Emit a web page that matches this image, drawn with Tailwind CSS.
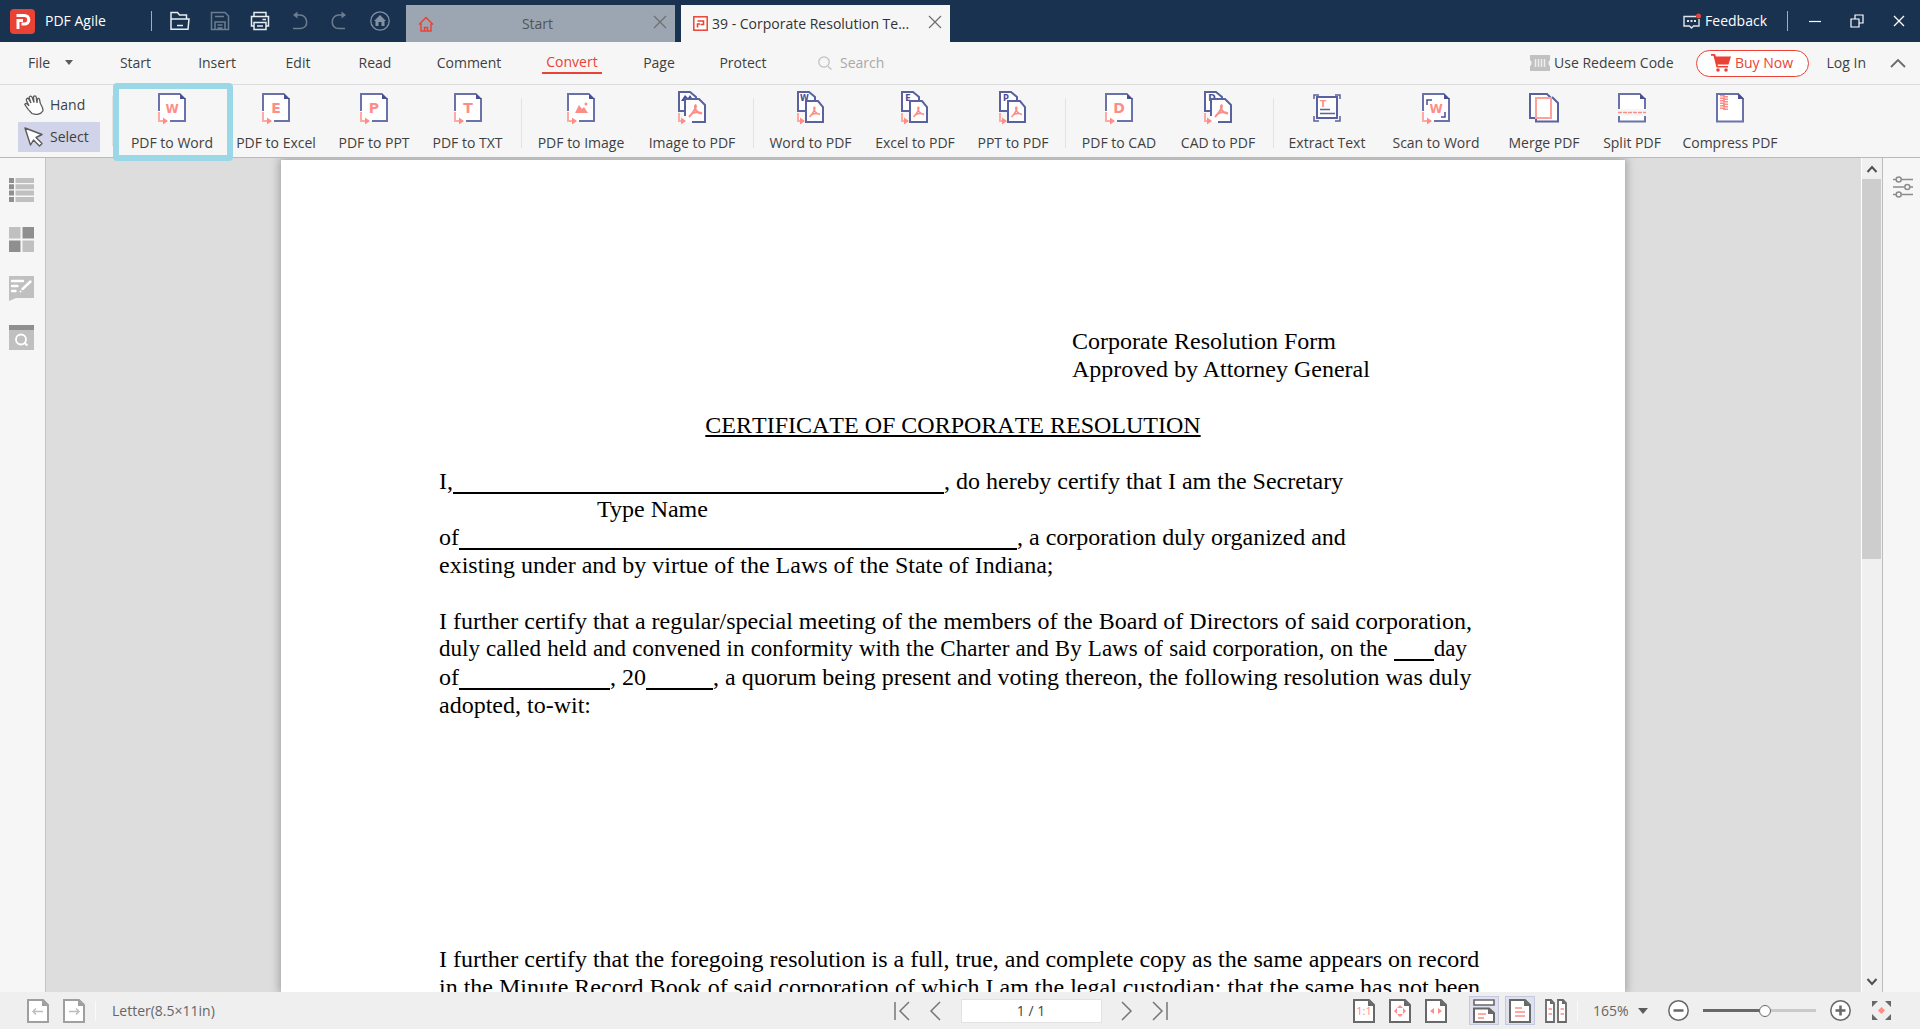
<!DOCTYPE html>
<html lang="en">
<head>
<meta charset="utf-8">
<title>PDF Agile</title>
<script src="https://cdn.jsdelivr.net/npm/@tailwindcss/browser@4"></script>
</head>
<body class="flex h-screen flex-col overflow-hidden bg-[#f6f6f6] font-['Open_Sans',sans-serif] text-sm text-[#3f3f3f]">

<!-- Shared icon shapes -->
<svg class="hidden">
  <symbol id="from-pdf" viewBox="0 0 28 32">
    <path d="M1 1H22L27 6V28H1Z" fill="#fff"/>
    <path d="M1 18V1H22M27 5V28H12" fill="none" stroke="#6a72ab" stroke-width="2"/>
    <path d="M22 0L28 6H22Z" fill="#4a4f94"/>
    <path d="M1 19V28H6" fill="none" stroke="#ffa9a3" stroke-width="2"/>
    <path d="M5 24.5L10 28L5 31.5Z" fill="#ff8d87"/>
  </symbol>
  <symbol id="back-page" viewBox="0 0 28 34">
    <path d="M1 1H12L18 6V20H1Z" fill="#fff" stroke="#5a619f" stroke-width="2"/>
    <path d="M1 22V30H4" fill="none" stroke="#ffa9a3" stroke-width="2"/>
    <path d="M3 26.5L8 30L3 33.5Z" fill="#ff8d87"/>
  </symbol>
  <symbol id="front-page" viewBox="0 0 28 34">
    <path d="M9 10H21L26 16V31H9Z" fill="#fff" stroke="#5a619f" stroke-width="2"/>
    <path d="M17 16C19 16 17.5 21 12.5 26M17 16C16 19 19 23 23 23.5M13.5 24.5C16 22.5 20 22 23 23.5" fill="none" stroke="#ff8d87" stroke-width="1.6"/>
  </symbol>
  <symbol id="front-page-open" viewBox="0 0 28 34">
    <path d="M8 8H21L27 14V31H8Z" fill="#fff"/>
    <path d="M7 25V8H21L27 14V31H14" fill="none" stroke="#5a619f" stroke-width="2"/>
    <path d="M17 14C19.5 14 17 20 11 26M17 14C16 18 19 22 24 22.5M12.500 24C15 21 20 20.500 24 22.500" fill="none" stroke="#ff8d87" stroke-width="2"/>
  </symbol>
  <symbol id="sheet" viewBox="0 0 22 24">
    <path d="M1 1H16L21 6V23H1Z" fill="#fff" stroke="currentColor" stroke-width="2"/>
    <path d="M15 1L21 7H15Z" fill="currentColor"/>
  </symbol>
</svg>

<header class="flex h-[42px] shrink-0 items-center bg-[#19324f] text-white">
  <div class="flex w-[151px] items-center gap-2.5 pl-2.5">
    <svg class="h-[25px] w-[25px]" viewBox="0 0 25 25"><rect width="25" height="25" rx="4" fill="#ea4335"/><path d="M8 20V11.500H13" fill="none" stroke="#fff" stroke-width="3"/><path d="M6.500 6.500H14.500A4 4 0 0 1 14.500 15H11.500" fill="none" stroke="#fff" stroke-width="3.200"/></svg>
    <span>PDF Agile</span>
  </div>
  <div class="h-5 w-px bg-[#a3adb9]"></div>
  <nav class="flex w-[254px] items-center gap-5 pl-[18px]" aria-label="Quick actions">
    <button aria-label="Open"><svg class="size-5" viewBox="0 0 20 20" fill="none" stroke="#e8edf2" stroke-width="1.500"><path d="M1 8V1.500H7.500L9.500 4H16.500V7.500M1 18V8H19L18 18.200H1ZM7 14.500H13"/></svg></button>
    <button aria-label="Save"><svg class="size-5" viewBox="0 0 20 20" fill="none" stroke="#6d7d90" stroke-width="1.500"><path d="M1.500 1.500H15L18.500 5V18.500H1.500ZM5 5.500H14M5 18V11H15V18M7.500 14H12.500M7.500 17H12.500"/></svg></button>
    <button aria-label="Print"><svg class="size-5" viewBox="0 0 20 20" fill="none" stroke="#e8edf2" stroke-width="1.500"><path d="M4 5.500V1.500H16V5.500M4 15H1.500V5.500H18.500V15H16M4 11.500H16V18.500H4ZM7 15H13M12.500 8.500H16"/></svg></button>
    <button aria-label="Undo"><svg class="size-5" viewBox="0 0 20 20" fill="none" stroke="#6d7d90" stroke-width="1.500"><path d="M4 4H10C18 4 19.500 17.500 10.500 17.500H3"/><path d="M7.500 .5L3 4L7.500 7.500Z" fill="#6d7d90" stroke="none"/></svg></button>
    <button aria-label="Redo"><svg class="size-5" viewBox="0 0 20 20" fill="none" stroke="#6d7d90" stroke-width="1.500"><path d="M15 4H9C.5 4 -.5 17.500 9 17.500H15"/><path d="M11.500 .5L16 4L11.500 7.500Z" fill="#6d7d90" stroke="none"/></svg></button>
    <button aria-label="Home"><svg class="size-5" viewBox="0 0 20 20"><circle cx="10" cy="10" r="9.200" fill="none" stroke="#8391a2" stroke-width="1.300"/><path d="M10 4L16 10H14.500V15H11.500V11H8.500V15H5.500V10H4Z" fill="#8391a2"/></svg></button>
  </nav>
  <div class="flex gap-1.5 self-end text-[#333]">
    <div class="flex h-[37px] w-[269px] items-center bg-[#9ca6b2] px-2">
      <svg class="mx-1 size-4" viewBox="0 0 16 16" fill="none" stroke="#ea4335" stroke-width="1.500"><path d="M1 8.500L8 1.500L15 8.500M3 7.500V15H13V7.500M6.500 15V11.500H9.500V15"/></svg>
      <button class="flex-1 pr-4 text-center text-[#50545b]">Start</button>
      <button aria-label="Close Start" class="pb-1"><svg class="size-3.5" viewBox="0 0 14 14" stroke="#6f6f6f" stroke-width="1.200"><path d="M1 1L13 13M13 1L1 13"/></svg></button>
    </div>
    <div class="flex h-[37px] w-[269px] items-center bg-[#f6f6f6] pr-2 pl-3">
      <svg class="mr-1 size-[15px]" viewBox="0 0 15 15"><rect x=".8" y=".8" width="13.400" height="13.400" fill="#fff" stroke="#ea4335" stroke-width="1.500"/><path d="M4.500 5H10.500V8.500H7.500M4.500 11.500V8H7" fill="none" stroke="#ea4335" stroke-width="1.600"/></svg>
      <button class="flex-1 text-left whitespace-nowrap">39 - Corporate Resolution Te...</button>
      <button aria-label="Close document" class="pb-1"><svg class="size-3.5" viewBox="0 0 14 14" stroke="#6f6f6f" stroke-width="1.200"><path d="M1 1L13 13M13 1L1 13"/></svg></button>
    </div>
  </div>
  <div class="ml-auto flex items-center pr-3.5">
    <button class="flex items-center gap-1"><svg class="h-4 w-[18px]" viewBox="0 0 18 16"><path d="M13 3.500H1V13H6.500L8.500 15L10.500 13H16V6" fill="none" stroke="#dfe5ec" stroke-width="1.400"/><path d="M4 7H6V9H4ZM7.500 7H9.500V9H7.500ZM11 7H13V9H11Z" fill="#dfe5ec"/><circle cx="15.500" cy="3" r="2.500" fill="#ea4335"/></svg>Feedback</button>
    <div class="mx-5 h-5 w-px bg-[#a3adb9]"></div>
    <div class="flex items-center gap-7">
      <button aria-label="Minimize"><svg class="size-3.5" viewBox="0 0 14 14" stroke="#fff" stroke-width="1.200"><path d="M1 7.500H13"/></svg></button>
      <button aria-label="Restore"><svg class="size-3.5" viewBox="0 0 14 14" fill="none" stroke="#fff" stroke-width="1.200"><path d="M1 5H9V13H1ZM5 5V1H13V9H9"/></svg></button>
      <button aria-label="Close"><svg class="size-3.5" viewBox="0 0 14 14" stroke="#fff" stroke-width="1.300"><path d="M2 2L12 12M12 2L2 12"/></svg></button>
    </div>
  </div>
</header>

<div class="flex h-[43px] shrink-0 items-center border-b border-[#dcdcdc]">
  <nav class="flex h-full items-center" aria-label="Menu">
    <button class="flex w-[95px] items-center gap-3.5 pl-7">File<svg class="h-1.5 w-2.5" viewBox="0 0 10 6"><path d="M1 0H9L5 5Z" fill="#5c5c5c"/></svg></button>
    <button class="w-[81px]">Start</button>
    <button class="w-[82px]">Insert</button>
    <button class="w-20">Edit</button>
    <button class="w-[74px]">Read</button>
    <button class="w-[114px]">Comment</button>
    <button class="mx-4 w-[60px] border-b-2 border-[#ea4335] text-[#ea4335]">Convert</button>
    <button class="w-[82px]">Page</button>
    <button class="w-[86px]">Protect</button>
  </nav>
  <label class="ml-8 flex items-center gap-2">
    <svg class="size-3.5" viewBox="0 0 14 14" fill="none" stroke="#bdbdbd" stroke-width="1.200"><circle cx="6" cy="6" r="5.200"/><path d="M10 10.500L13.500 13.500"/></svg>
    <input type="text" aria-label="Search" placeholder="Search" class="w-28 bg-transparent outline-none placeholder:text-[#a9a9a9]">
  </label>
  <div class="ml-auto flex items-center pr-3.5">
    <a href="#" class="flex items-center gap-1 whitespace-nowrap"><svg class="h-4 w-5" viewBox="0 0 20 16"><path d="M0 0H20V5C18 6 18 10 20 11V16H0V11C2 10 2 6 0 5Z" fill="#c1c1c1"/><path d="M5.500 4V12M8.500 4V12M11.500 4V12M14.500 4V12" stroke="#eee" stroke-width="1.500"/></svg>Use Redeem Code</a>
    <button class="ml-[22px] flex h-[27px] w-[113px] items-center justify-center gap-1 rounded-full border border-[#ea4335] bg-white whitespace-nowrap text-[#ea4335]"><svg class="h-[18px] w-5" viewBox="0 0 20 18" fill="#ea4335"><path d="M0 0H4L5 2.500H20L17.500 10.500H6.500L7 12H17V13.500H5.500L2.500 1.800H0Z"/><circle cx="7" cy="16" r="1.800"/><circle cx="15" cy="16" r="1.800"/></svg>Buy Now</button>
    <a href="#" class="ml-[18px] whitespace-nowrap">Log In</a>
    <button aria-label="Collapse ribbon" class="ml-6"><svg class="h-2.5 w-4" viewBox="0 0 16 10" fill="none" stroke="#6a6a6a" stroke-width="1.800"><path d="M1 9L8 2L15 9"/></svg></button>
  </div>
</div>

<div class="relative z-10 flex h-[73px] shrink-0 items-center border-b border-[#b9b9b9] pt-1 whitespace-nowrap">
  <div class="flex w-[118px] items-center pb-1">
    <div class="ml-[18px] flex w-[82px] flex-col gap-0.5">
      <button class="flex h-[30px] items-center gap-1.5 pl-1.5"><svg class="size-5" viewBox="0 0 20 20"><path d="M8 18.500C5 15.500 2.500 12.500 .8 9.500C1.500 7.500 3.500 8.500 5 11L2.500 5.500C2 3 4 2.500 5 4.500L7 8L5.200 3C5 .5 7.500 .5 8.200 2.500L10 7.500L9.500 2.500C9.500 .3 12 .5 12.300 2.500L13 8L13.300 4.500C14 2.500 15.500 3.500 15.700 5C15.500 10 20 12 18.800 16C17 19.500 12 20 8 18.500Z" fill="#fff" stroke="#5a5a5a" stroke-width="1.300"/></svg>Hand</button>
      <button class="flex h-[30px] items-center gap-1.5 bg-[#d1d3e9] pl-1.5"><svg class="size-5" viewBox="0 0 20 20"><path d="M1 1L18 7.500L12 10.500L18 16.500L15.500 19L9.500 13L6.500 18Z" fill="#fff" stroke="#5a5a5a" stroke-width="1.400" stroke-linejoin="round"/></svg>Select</button>
    </div>
    <div class="ml-3 h-[50px] w-px bg-[#e3e3e3]"></div>
  </div>

  <button class="relative flex w-[108px] flex-col items-center gap-2"><span class="absolute -top-2.5 -right-[7px] -bottom-2 -left-[5px] rounded-sm border-[6px] border-[#9ad8e8]"></span>
    <svg class="h-8 w-7" viewBox="0 0 28 32"><use href="#from-pdf"/><text x="14" y="20" text-anchor="middle" class="fill-[#ff8d87] font-['DejaVu_Sans'] text-xs font-bold">W</text></svg>PDF to Word</button>
  <button class="flex w-[100px] flex-col items-center gap-2">
    <svg class="h-8 w-7" viewBox="0 0 28 32"><use href="#from-pdf"/><text x="14" y="20" text-anchor="middle" class="fill-[#ff8d87] font-['DejaVu_Sans'] text-sm font-bold">E</text></svg>PDF to Excel</button>
  <button class="flex w-24 flex-col items-center gap-2">
    <svg class="h-8 w-7" viewBox="0 0 28 32"><use href="#from-pdf"/><text x="14" y="20" text-anchor="middle" class="fill-[#ff8d87] font-['DejaVu_Sans'] text-sm font-bold">P</text></svg>PDF to PPT</button>
  <button class="flex w-[91px] flex-col items-center gap-2">
    <svg class="h-8 w-7" viewBox="0 0 28 32"><use href="#from-pdf"/><text x="14" y="20" text-anchor="middle" class="fill-[#ff8d87] font-['DejaVu_Sans'] text-sm font-bold">T</text></svg>PDF to TXT</button>
  <div class="mx-2 h-[50px] w-px bg-[#e3e3e3]"></div>
  <button class="flex w-[102px] flex-col items-center gap-2">
    <svg class="h-8 w-7" viewBox="0 0 28 32"><use href="#from-pdf"/><path d="M8 20L12 12L15 16L17 14L21 20Z" fill="#ff8d87"/><circle cx="19" cy="11" r="1.500" fill="#ff8d87"/></svg>PDF to Image</button>
  <button class="-mt-0.5 flex w-[120px] flex-col items-center gap-2">
    <svg class="h-[34px] w-7" viewBox="0 0 28 34"><use href="#back-page"/><path d="M3 10L7 4L10 7L12 4L16 10Z" fill="#4a4f94"/><use href="#front-page-open"/></svg>Image to PDF</button>
  <div class="mx-px h-[50px] w-px bg-[#e3e3e3]"></div>
  <button class="-mt-0.5 flex w-[111px] flex-col items-center gap-2">
    <svg class="h-[34px] w-7" viewBox="0 0 28 34"><use href="#back-page"/><text x="7.500" y="9.500" text-anchor="middle" class="fill-[#4a4f94] font-['DejaVu_Sans'] text-[8px] font-bold">W</text><use href="#front-page"/></svg>Word to PDF</button>
  <button class="-mt-0.5 flex w-[98px] flex-col items-center gap-2">
    <svg class="h-[34px] w-7" viewBox="0 0 28 34"><use href="#back-page"/><text x="7" y="9.500" text-anchor="middle" class="fill-[#4a4f94] font-['DejaVu_Sans'] text-[8px] font-bold">E</text><use href="#front-page"/></svg>Excel to PDF</button>
  <button class="-mt-0.5 flex w-[98px] flex-col items-center gap-2">
    <svg class="h-[34px] w-7" viewBox="0 0 28 34"><use href="#back-page"/><text x="7" y="9.500" text-anchor="middle" class="fill-[#4a4f94] font-['DejaVu_Sans'] text-[8px] font-bold">P</text><use href="#front-page"/></svg>PPT to PDF</button>
  <div class="mx-[3px] h-[50px] w-px bg-[#e3e3e3]"></div>
  <button class="flex w-[100px] flex-col items-center gap-2">
    <svg class="h-8 w-7" viewBox="0 0 28 32"><use href="#from-pdf"/><text x="14" y="20" text-anchor="middle" class="fill-[#ff8d87] font-['DejaVu_Sans'] text-sm font-bold">D</text></svg>PDF to CAD</button>
  <button class="-mt-0.5 flex w-[98px] flex-col items-center gap-2">
    <svg class="h-[34px] w-7" viewBox="0 0 28 34"><use href="#back-page"/><text x="8" y="10" text-anchor="middle" class="fill-[#4a4f94] font-['DejaVu_Sans'] text-[9px] font-bold">D</text><use href="#front-page-open"/></svg>CAD to PDF</button>
  <div class="mx-1.5 h-[50px] w-px bg-[#e3e3e3]"></div>
  <button class="flex w-[94px] flex-col items-center gap-2">
    <svg class="h-8 w-7" viewBox="0 0 28 32" fill="none" stroke="#5a619f" stroke-width="2"><path d="M4 4H24V25H4Z" fill="#fff"/><path d="M1 6V2H6M22 2H27V6M27 23V28H22M6 28H1V23M7 16.500H17M7 20.500H22" stroke-width="1.500"/><text x="10" y="13.500" text-anchor="middle" stroke="none" class="fill-[#ff8d87] font-['DejaVu_Sans'] text-[9px] font-bold">T</text></svg>Extract Text</button>
  <button class="flex w-[124px] flex-col items-center gap-2">
    <svg class="h-8 w-7" viewBox="0 0 28 32"><use href="#from-pdf"/><path d="M5 12V7H10M19 24H23V19" fill="none" stroke="#4a4f94" stroke-width="1.500"/><text x="14" y="20" text-anchor="middle" class="fill-[#ff8d87] font-['DejaVu_Sans'] text-xs font-bold">W</text></svg>Scan to Word</button>
  <button class="flex w-[92px] flex-col items-center gap-2">
    <svg class="h-8 w-[30px]" viewBox="0 0 30 32"><path d="M1 1H18L22 5V25H1Z" fill="#fff" stroke="#5a619f" stroke-width="2"/><path d="M7 5H22L29 10V28H7Z" fill="#fff"/><path d="M7 26V28.500H29V10L23 4" fill="none" stroke="#5a619f" stroke-width="2"/><path d="M7 5H22V25H7Z" fill="none" stroke="#ffa19b" stroke-width="2"/></svg>Merge PDF</button>
  <button class="flex w-[84px] flex-col items-center gap-2">
    <svg class="h-8 w-7" viewBox="0 0 28 32"><path d="M1 1H22L27 6V28H1Z" fill="#fff"/><path d="M0 16H28V23H0Z" fill="#f6f6f6"/><path d="M1 16V1H22M27 5V16M1 23V28.500H27V23" fill="none" stroke="#6a72ab" stroke-width="2"/><path d="M22 0L28 6H22Z" fill="#4a4f94"/><path d="M0 19.500H28" stroke="#ff8d87" stroke-width="1.500" stroke-dasharray="4 1"/></svg>Split PDF</button>
  <button class="flex w-28 flex-col items-center gap-2">
    <svg class="h-8 w-7" viewBox="0 0 28 32"><path d="M1 1H22L27 6V28.500H1Z" fill="#fff" stroke="#6a72ab" stroke-width="2"/><path d="M22 0L28 6H22Z" fill="#4a4f94"/><path d="M6.500 2V17" stroke="#ff8d87" stroke-width="5" stroke-dasharray="1.500 1"/><path d="M9.500 3V17" stroke="#ff8d87" stroke-width="5" stroke-dasharray="1.500 1"/></svg>Compress PDF</button>
</div>

<div class="flex min-h-0 flex-1">
  <nav class="flex w-[46px] shrink-0 flex-col items-center gap-6 border-r border-[#c4c4c4] pt-5 pr-0.5" aria-label="Panels">
    <button aria-label="Outline"><svg class="size-[25px]" viewBox="0 0 25 25"><path d="M0 0H5V5H0ZM0 6.300H5V11.300H0ZM0 12.600H5V17.600H0ZM0 19H5V24H0Z" fill="#8f8f8f"/><path d="M6.500 0H25V5H6.500ZM6.500 6.300H25V11.300H6.500ZM6.500 12.600H25V17.600H6.500ZM6.500 19H25V24H6.500Z" fill="#c0c0c0"/></svg></button>
    <button aria-label="Thumbnails"><svg class="size-[25px]" viewBox="0 0 25 25"><path d="M0 0H11.500V11.500H0ZM13.500 13.500H25V25H13.500Z" fill="#c0c0c0"/><path d="M13.500 0H25V11.500H13.500ZM0 13.500H11.500V25H0Z" fill="#8f8f8f"/></svg></button>
    <button aria-label="Comments"><svg class="size-[25px]" viewBox="0 0 25 25"><path d="M0 0H25V22H7L0 25Z" fill="#c0c0c0"/><path d="M3 5H14M3 10H8.500M3 15H6.500M21.500 5.500L13.500 13" stroke="#fff" stroke-width="2.400" stroke-linecap="round"/><circle cx="11.500" cy="15.500" r="1" fill="#fff"/></svg></button>
    <button aria-label="Find"><svg class="size-[25px]" viewBox="0 0 25 25"><path d="M0 0H25V25H0Z" fill="#c0c0c0"/><path d="M0 0H25V5H0Z" fill="#8f8f8f"/><circle cx="12" cy="14.500" r="5" fill="none" stroke="#fff" stroke-width="1.800"/><path d="M15 17.500L18.500 20.500" stroke="#fff" stroke-width="2"/></svg></button>
  </nav>

  <main class="flex min-w-0 flex-1 justify-center overflow-hidden bg-[#ddd] pt-0.5 pr-px">
    <article class="w-[1344px] shrink-0 bg-white px-[158px] pt-[167px] font-['Liberation_Serif',serif] text-2xl leading-[28px] whitespace-nowrap text-black shadow-[0_0_8px_2px_rgba(0,0,0,0.25)]">
      <p class="pl-[633px]">Corporate Resolution Form<br>Approved by Attorney General</p>
      <h1 class="mt-7 text-center underline decoration-2 underline-offset-2 [font-kerning:none]">CERTIFICATE OF CORPORATE RESOLUTION</h1>
      <p class="mt-7">I,<span class="inline-block h-6 w-[491px] border-b-2 align-[-5px]"></span>, do hereby certify that I am the Secretary<br>
        <span class="pl-[158px]">Type Name</span><br>
        of<span class="inline-block h-6 w-[558px] border-b-2 align-[-5px]"></span>, a corporation duly organized and<br>
        existing under and by virtue of the Laws of the State of Indiana;</p>
      <p class="mt-7">
        <span class="block [text-align-last:justify]">I further certify that a regular/special meeting of the members of the Board of Directors of said corporation,</span>
        <span class="block text-[23px] [text-align-last:justify]">duly called held and convened in conformity with the Charter and By Laws of said corporation, on the <span class="inline-block h-6 w-10 border-b-2 align-[-5px]"></span>day</span>
        <span class="block [text-align-last:justify]">of<span class="inline-block h-6 w-[151px] border-b-2 align-[-5px]"></span>, 20<span class="inline-block h-6 w-[67px] border-b-2 align-[-5px]"></span>, a quorum being present and voting thereon, the following resolution was duly</span>
        <span class="block">adopted, to-wit:</span>
      </p>
      <p class="mt-[226px]">
        <span class="block [text-align-last:justify]">I further certify that the foregoing resolution is a full, true, and complete copy as the same appears on record</span>
        <span class="block [text-align-last:justify]">in the Minute Record Book of said corporation of which I am the legal custodian; that the same has not been</span>
      </p>
    </article>
  </main>

  <div class="flex w-[21px] shrink-0 flex-col border-l border-white bg-[#f0f0f0]">
    <button aria-label="Scroll up" class="flex h-[21px] items-center justify-center"><svg class="h-2 w-3" viewBox="0 0 12 8" fill="none" stroke="#505050" stroke-width="2"><path d="M1.500 7L6 2L10.500 7"/></svg></button>
    <div class="min-h-0 flex-1"><div class="h-[48%] w-[19px] bg-[#cdcdcd]"></div></div>
    <button aria-label="Scroll down" class="flex h-[21px] items-center justify-center"><svg class="h-2 w-3" viewBox="0 0 12 8" fill="none" stroke="#505050" stroke-width="2"><path d="M1.500 1L6 6L10.500 1"/></svg></button>
  </div>
  <aside class="flex w-[38px] shrink-0 justify-center border-l border-[#bdbdbd] pt-[18px] pl-0.5">
    <button aria-label="Properties" class="self-start"><svg class="h-[22px] w-5" viewBox="0 0 20 22" fill="none" stroke="#8c8c8c" stroke-width="1.500"><path d="M0 3.500H3M8.500 3.500H20M0 11H11.500M17 11H20M0 18.500H3M8.500 18.500H20"/><circle cx="5.700" cy="3.500" r="2.500"/><circle cx="14.300" cy="11" r="2.500"/><circle cx="5.700" cy="18.500" r="2.500"/></svg></button>
  </aside>
</div>

<footer class="grid h-[37px] shrink-0 grid-cols-[894fr_274px_752fr] items-center bg-[#efefef] text-[#666]">
  <div class="flex items-center pl-[27px]">
    <button aria-label="Previous view" class="text-[#9f9f9f]"><svg class="h-6 w-[22px]" viewBox="0 0 22 24"><use href="#sheet"/><path d="M6 12.500H16M9 9.500L6 12.500L9 15.500" fill="none" stroke="#bdbdbd" stroke-width="1.500"/></svg></button>
    <button aria-label="Next view" class="ml-3.5 text-[#9f9f9f]"><svg class="h-6 w-[22px]" viewBox="0 0 22 24"><use href="#sheet"/><path d="M6 12.500H16M13 9.500L16 12.500L13 15.500" fill="none" stroke="#bdbdbd" stroke-width="1.500"/></svg></button>
    <div class="ml-2.5 h-5 w-px bg-[#fafafa]"></div>
    <span class="ml-4">Letter(8.5×11in)</span>
  </div>
  <div class="flex items-center justify-between">
    <button aria-label="First page"><svg class="h-5 w-4" viewBox="0 0 16 20" fill="none" stroke="#777" stroke-width="1.500"><path d="M1 1V19M15 1L6 10L15 19"/></svg></button>
    <button aria-label="Previous page"><svg class="h-5 w-3" viewBox="0 0 12 20" fill="none" stroke="#777" stroke-width="1.500"><path d="M11 1L2 10L11 19"/></svg></button>
    <input type="text" aria-label="Page number" value="1 / 1" class="h-6 w-[141px] border border-[#e2e2e2] bg-white text-center text-[#444]">
    <button aria-label="Next page"><svg class="h-5 w-3" viewBox="0 0 12 20" fill="none" stroke="#777" stroke-width="1.500"><path d="M1 1L10 10L1 19"/></svg></button>
    <button aria-label="Last page"><svg class="h-5 w-4" viewBox="0 0 16 20" fill="none" stroke="#777" stroke-width="1.500"><path d="M1 1L10 10L1 19M15 1V19"/></svg></button>
  </div>
  <div class="flex items-center justify-end pr-7">
    <div class="flex items-center gap-3.5 text-[#686868]">
      <button aria-label="Actual size"><svg class="h-6 w-[22px]" viewBox="0 0 22 24"><use href="#sheet"/><text x="11" y="16" text-anchor="middle" class="fill-[#ff8d87] text-[11px]">1:1</text></svg></button>
      <button aria-label="Fit page"><svg class="h-6 w-[22px]" viewBox="0 0 22 24"><use href="#sheet"/><path d="M11 6L14 9H8ZM11 18L14 15H8ZM5 12L8 9V15ZM17 12L14 9V15Z" fill="#ff8d87"/></svg></button>
      <button aria-label="Fit width"><svg class="h-6 w-[22px]" viewBox="0 0 22 24"><use href="#sheet"/><path d="M5 12L9 9V15ZM17 12L13 9V15Z" fill="#ff8d87"/></svg></button>
    </div>
    <div class="ml-[22px] flex gap-1.5 text-[#686868]">
      <button aria-label="Continuous" class="flex h-[29px] w-[30px] items-center justify-center border border-[#c5c9e0] bg-[#dfe1ee]"><svg class="h-6 w-[22px]" viewBox="0 0 22 24"><path d="M1 1H21V6H1Z" fill="#fff" stroke="currentColor" stroke-width="1.600"/><path d="M1 9.500H16L21 14V23H1Z" fill="#fff" stroke="currentColor" stroke-width="2"/><path d="M15 9L21 15H15Z" fill="currentColor"/><path d="M5 15H13M5 19H11" stroke="#ff8d87" stroke-width="1.600"/></svg></button>
      <button aria-label="Single page" class="flex h-[29px] w-[30px] items-center justify-center border border-[#c5c9e0] bg-[#dfe1ee]"><svg class="h-6 w-[22px]" viewBox="0 0 22 24"><use href="#sheet"/><path d="M6 9H13M6 13H16M6 17H16" stroke="#ff8d87" stroke-width="1.600"/></svg></button>
      <button aria-label="Two pages" class="flex h-[29px] w-[30px] items-center justify-center"><svg class="h-6 w-[22px]" viewBox="0 0 22 24"><path d="M1 1H6L9 4V23H1ZM13 1H18L21 4V23H13Z" fill="#fff" stroke="currentColor" stroke-width="1.800"/><path d="M5 1L9 5H5ZM17 1L21 5H17Z" fill="currentColor"/><path d="M3.500 10H7M3.500 15H7M15.500 10H19M15.500 15H19" stroke="#ff8d87" stroke-width="1.600"/></svg></button>
    </div>
    <div class="ml-1.5 h-5 w-px bg-[#fafafa]"></div>
    <label class="relative ml-[15px] flex items-center">
      <select aria-label="Zoom" class="w-[55px] appearance-none bg-transparent"><option>165%</option></select>
      <svg class="pointer-events-none absolute right-0 h-1.5 w-2.5" viewBox="0 0 10 6"><path d="M0 0H10L5 6Z" fill="#5c5c5c"/></svg>
    </label>
    <button aria-label="Zoom out" class="ml-5"><svg class="size-[21px]" viewBox="0 0 21 21"><circle cx="10.500" cy="10.500" r="9.700" fill="#fff" stroke="#686868" stroke-width="1.500"/><path d="M5.500 10.500H15.500" stroke="#686868" stroke-width="2.500"/></svg></button>
    <input type="range" aria-label="Zoom level" min="0" max="100" value="55" class="mx-3.5 h-[3px] w-[113px] appearance-none bg-linear-to-r from-[#686868] from-55% to-[#cacaca] to-55% [&::-webkit-slider-thumb]:size-3 [&::-webkit-slider-thumb]:appearance-none [&::-webkit-slider-thumb]:rounded-full [&::-webkit-slider-thumb]:border [&::-webkit-slider-thumb]:border-[#686868] [&::-webkit-slider-thumb]:bg-white">
    <button aria-label="Zoom in"><svg class="size-[21px]" viewBox="0 0 21 21"><circle cx="10.500" cy="10.500" r="9.700" fill="#fff" stroke="#686868" stroke-width="1.500"/><path d="M5.500 10.500H15.500M10.500 5.500V15.500" stroke="#686868" stroke-width="2.500"/></svg></button>
    <button aria-label="Full screen" class="ml-5"><svg class="size-[21px]" viewBox="0 0 21 21"><path d="M1 1H7L1 7ZM14 1H20V7ZM1 14V20H7ZM20 14V20H14Z" fill="#686868"/><path d="M10.500 7L14 10.500L10.500 14L7 10.500Z" fill="#ff8d87"/></svg></button>
  </div>
</footer>
</body>
</html>
